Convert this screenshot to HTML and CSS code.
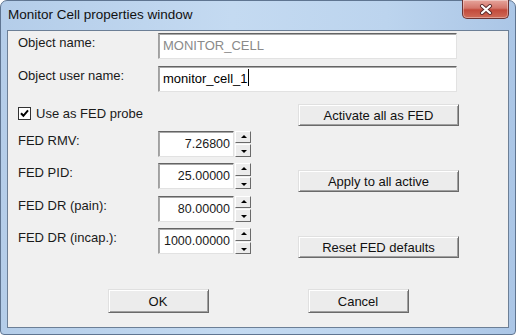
FILE: index.html
```html
<!DOCTYPE html>
<html lang="en">
<head>
	<meta charset="utf-8">
	<title>Monitor Cell properties window</title>
	<link rel="stylesheet" href="styles.css">
</head>
<body>
	<div class="window">
		<div class="titlebar">
			<span class="title">Monitor Cell properties window</span>
			<div class="close">
				<svg width="14" height="11" viewBox="0 0 14 11"><path d="M3 2 L11 9 M11 2 L3 9" stroke="#5a2a2a" stroke-width="4" stroke-linecap="round"/><path d="M3 2 L11 9 M11 2 L3 9" stroke="#fff" stroke-width="2.2" stroke-linecap="round"/></svg>
			</div>
		</div>
		<div class="client">
			<!-- name rows -->
			<div class="row">
				<label class="lbl">Object name:</label>
				<div class="textbox disabled">MONITOR_CELL</div>
			</div>
			<div class="row">
				<label class="lbl">Object user name:</label>
				<div class="textbox">monitor_cell_1<span class="caret"></span></div>
			</div>
			<!-- FED part -->
			<div class="fed">
				<div class="fed-left">
					<div class="check-row">
						<span class="checkbox">
							<svg width="9" height="9" viewBox="0 0 9 9"><path d="M1 4.2 L3.4 6.8 L8 1.4" fill="none" stroke="#000" stroke-width="2"/></svg>
						</span>
						<span>Use as FED probe</span>
					</div>
					<div class="spin-row">
						<label class="lbl">FED RMV:</label>
						<div class="spin-box">7.26800</div>
						<div class="spin"><span class="up"></span><span class="down"></span></div>
					</div>
					<div class="spin-row">
						<label class="lbl">FED PID:</label>
						<div class="spin-box">25.00000</div>
						<div class="spin"><span class="up"></span><span class="down"></span></div>
					</div>
					<div class="spin-row">
						<label class="lbl">FED DR (pain):</label>
						<div class="spin-box">80.00000</div>
						<div class="spin"><span class="up"></span><span class="down"></span></div>
					</div>
					<div class="spin-row">
						<label class="lbl">FED DR (incap.):</label>
						<div class="spin-box">1000.00000</div>
						<div class="spin"><span class="up"></span><span class="down"></span></div>
					</div>
				</div>
				<div class="fed-right">
					<button class="btn wide">Activate all as FED</button>
					<button class="btn wide">Apply to all active</button>
					<button class="btn wide">Reset FED defaults</button>
				</div>
			</div>
			<div class="footer">
				<button class="btn small">OK</button>
				<button class="btn small">Cancel</button>
			</div>
		</div>
	</div>
</body>
</html>
```
FILE: styles.css
```css
*{
	margin: 0;
	padding: 0;
	box-sizing: border-box;
}
body{
	width: 516px;
	height: 335px;
	overflow: hidden;
	background: #fff;
	font-family: "Liberation Sans", Arial, sans-serif;
	font-size: 13px;
	color: #1a1a1a;
}
/*window frame*/
.window{
	width: 516px;
	height: 335px;
	border: 1px solid #5f7591;
	border-radius: 7px 7px 4px 4px;
	background: linear-gradient(90deg, #b4cde9 0%, #c4daf1 45%, #bcd4ee 75%, #abc6e6 100%);
	display: flex;
	flex-direction: column;
}
.titlebar{
	height: 29px;
	display: flex;
	align-items: flex-start;
	justify-content: space-between;
	padding-left: 7px;
	padding-right: 6px;
}
.title{
	font-family: "Liberation Sans", Arial, sans-serif;
	font-size: 13.5px;
	line-height: 28px;
	color: #111;
}
.close{
	width: 47px;
	height: 19px;
	margin-top: -1px;
	border: 1px solid #6b3434;
	border-top: none;
	border-radius: 0 0 5px 5px;
	background: linear-gradient(180deg, #e6a59c 0%, #d4766b 45%, #c24a3b 55%, #cf6b58 100%);
	box-shadow: inset 0 0 0 1px rgba(255,255,255,0.35);
	display: flex;
	align-items: center;
	justify-content: center;
}
/*client area*/
.client{
	flex: 1;
	margin: 0 6px 6px 6px;
	border: 1px solid #6c7f96;
	background: #f0f0f0;
	padding: 2px 0 0 10px;
}
.row{
	display: flex;
	align-items: center;
	height: 26px;
	margin-bottom: 7px;
}
.lbl{
	width: 140px;
	flex-shrink: 0;
	margin-top: -7px;
}
.textbox,
.spin-box{
	height: 26px;
	background: #fff;
	border: 1px solid;
	border-color: #646464 #e2e2e2 #e2e2e2 #a0a0a0;
	box-shadow: inset 1px 1px 0 #a8a8a8;
	line-height: 24px;
	padding: 0 4px;
}
.textbox{
	width: 299px;
	font-size: 13px;
	color: #000;
}
.textbox.disabled{
	color: #8a8a8a;
}
.caret{
	display: inline-block;
	width: 1px;
	height: 17px;
	background: #000;
	vertical-align: -3px;
}
/*FED area*/
.fed{
	display: flex;
	margin-top: 12px;
}
.fed-left{
	width: 280px;
	display: flex;
	flex-direction: column;
	gap: 6.5px;
}
.check-row{
	height: 22px;
	display: flex;
	align-items: center;
	gap: 5px;
	margin-top: -2px;
}
.checkbox{
	width: 13px;
	height: 13px;
	border: 1px solid #333;
	background: #fff;
	display: flex;
	align-items: center;
	justify-content: center;
}
.spin-row{
	display: flex;
	align-items: center;
	height: 26px;
}
.spin-box{
	width: 76px;
	text-align: right;
	padding-right: 3px;
	font-size: 12.5px;
}
.spin{
	width: 16px;
	height: 26px;
	margin-left: 1px;
	display: flex;
	flex-direction: column;
	gap: 1px;
}
.spin span{
	flex: 1;
	background: #ececec;
	border: 1px solid;
	border-color: #fff #6a6a6a #6a6a6a #fff;
	position: relative;
}
.spin span::after{
	content: "";
	position: absolute;
	left: 5px;
	border-left: 3px solid transparent;
	border-right: 3px solid transparent;
}
.spin .up::after{
	top: 3px;
	border-bottom: 3px solid #000;
}
.spin .down::after{
	top: 5px;
	border-top: 3px solid #000;
}
.fed-right{
	display: flex;
	flex-direction: column;
	gap: 44px;
}
/*buttons*/
.btn{
	font-family: "Liberation Sans", Arial, sans-serif;
	font-size: 13px;
	color: #111;
	height: 22px;
	background: #ececec;
	border: 1px solid;
	border-color: #e0e0e0 #6a6a6a #6a6a6a #e0e0e0;
	box-shadow: inset 1px 1px 0 #fff, inset -1px -1px 0 #a0a0a0;
}
.btn.wide{
	width: 161px;
}
.btn.small{
	width: 101px;
	height: 24px;
}
.footer{
	display: flex;
	justify-content: center;
	gap: 99px;
	margin-top: 31px;
	margin-left: -10px;
}
```
